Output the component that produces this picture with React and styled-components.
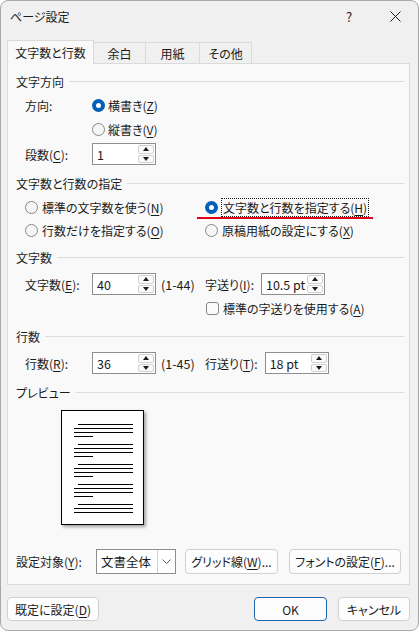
import styled, { createGlobalStyle } from "styled-components";

const GlobalStyle = createGlobalStyle`
  html, body {
    margin: 0;
    padding: 0;
    background: #ffffff;
  }
  body {
    font-family: "Noto Sans CJK JP", "Noto Sans", sans-serif;
    font-size: 12px;
    color: #1b1b1b;
    font-feature-settings: "palt";
  }
  u {
    text-underline-offset: 2px;
  }
`;

const Window = styled.div`
  width: 419px;
  height: 631px;
  box-sizing: border-box;
  border: 1px solid #a9a9a9;
  border-radius: 8px;
  background: #f0f0f0;
  display: flex;
  flex-direction: column;
  overflow: hidden;
`;

const TitleBar = styled.div`
  height: 30px;
  display: flex;
  align-items: center;
  padding-left: 9px;
`;

const Title = styled.span`
  flex: 1;
  font-size: 12px;
`;

const TitleButton = styled.div`
  width: 46px;
  height: 30px;
  display: flex;
  align-items: center;
  justify-content: center;
  font-size: 13px;
`;

const TabStrip = styled.div`
  height: 32px;
  display: flex;
  align-items: flex-end;
  padding-left: 6px;
`;

const Tab = styled.div`
  width: ${(p) => p.$w}px;
  height: ${(p) => (p.$active ? 24 : 21)}px;
  box-sizing: border-box;
  display: flex;
  align-items: center;
  justify-content: center;
  border: 1px solid #dadada;
  border-bottom: none;
  margin-left: ${(p) => (p.$first ? 0 : -1)}px;
  margin-bottom: ${(p) => (p.$active ? -1 : 0)}px;
  background: ${(p) => (p.$active ? "#f9f9f9" : "#f0f0f0")};
  position: relative;
  z-index: ${(p) => (p.$active ? 1 : 0)};
`;

const Panel = styled.div`
  margin: 0 8px 0 6px;
  height: 522px;
  box-sizing: border-box;
  border: 1px solid #dadada;
  background: #f9f9f9;
  padding: 8px 5px 0 8px;
  display: flex;
  flex-direction: column;
`;

const Heading = styled.div`
  height: 18px;
  margin-top: ${(p) => p.$mt || 0}px;
  display: flex;
  align-items: center;
  gap: 5px;
  &::after {
    content: "";
    flex: 1;
    height: 1px;
    background: #dcdcdc;
  }
`;

const Row = styled.div`
  display: flex;
  align-items: center;
  height: ${(p) => p.$h || 24}px;
  margin-top: ${(p) => p.$mt || 0}px;
  padding-left: ${(p) => (p.$indent ?? 9)}px;
  white-space: nowrap;
`;

const Label = styled.span`
  flex-shrink: 0;
  width: ${(p) => (p.$w ? `${p.$w}px` : "auto")};
  margin-right: ${(p) => p.$mr || 0}px;
`;

const Range = styled.span`
  width: 44px;
  padding-left: 5px;
  flex-shrink: 0;
  font-size: 12.5px;
`;

const SpinBox = styled.div`
  width: ${(p) => p.$w || 64}px;
  height: 22px;
  box-sizing: border-box;
  border: 1px solid #8e8e8e;
  background: #ffffff;
  display: flex;
  flex-shrink: 0;
`;

const SpinValue = styled.span`
  flex: 1;
  display: flex;
  align-items: center;
  padding-left: 4px;
  font-size: 12.5px;
`;

const SpinButtons = styled.div`
  width: 16px;
  display: flex;
  flex-direction: column;
  gap: 1px;
  padding: 1px 1px 1px 0;
`;

const SpinArrow = styled.div`
  flex: 1;
  border: 1px solid #d0d0d0;
  border-radius: 2px;
  background: #fbfbfb;
  display: flex;
  align-items: center;
  justify-content: center;
  &::before {
    content: "";
    border-left: 3.5px solid transparent;
    border-right: 3.5px solid transparent;
    ${(p) =>
      p.$down
        ? "border-top: 4px solid #1b1b1b;"
        : "border-bottom: 4px solid #1b1b1b;"}
  }
`;

const Option = styled.label`
  display: flex;
  align-items: center;
  gap: ${(p) => p.$gap ?? 4}px;
  height: 100%;
  position: relative;
`;

const RadioMark = styled.span`
  width: 13px;
  height: 13px;
  box-sizing: border-box;
  border-radius: 50%;
  flex-shrink: 0;
  display: flex;
  align-items: center;
  justify-content: center;
  background: ${(p) => (p.$on ? "#005fb8" : "#f6f6f6")};
  border: ${(p) => (p.$on ? "none" : "1px solid #878787")};
  &::after {
    content: "";
    display: ${(p) => (p.$on ? "block" : "none")};
    width: 5px;
    height: 5px;
    border-radius: 50%;
    background: #ffffff;
  }
`;

const CheckMark = styled.span`
  width: 13px;
  height: 13px;
  box-sizing: border-box;
  border: 1px solid #878787;
  border-radius: 3px;
  background: #fbfbfb;
  flex-shrink: 0;
`;

const Focused = styled.span`
  outline: 1px dotted #1b1b1b;
  outline-offset: 0;
  padding: 0 1px;
  line-height: 16px;
`;

const RedMark = styled.span`
  position: absolute;
  left: -8px;
  width: 176px;
  bottom: 0;
  height: 2px;
  background: #e0001a;
`;

const OptionGrid = styled.div`
  display: grid;
  grid-template-columns: 180px auto;
  grid-auto-rows: 23px;
  margin-top: ${(p) => p.$mt || 0}px;
  padding-left: 9px;
  white-space: nowrap;
`;

const Page = styled.div`
  width: 83px;
  height: 115px;
  box-sizing: border-box;
  margin: 9px 0 0 45px;
  border: 1px solid #000000;
  background: #ffffff;
  box-shadow: 2px 2px 3px rgba(0, 0, 0, 0.35);
`;

const Select = styled.div`
  width: 80px;
  height: 25px;
  box-sizing: border-box;
  border: 1px solid #8e8e8e;
  background: #ffffff;
  display: flex;
  flex-shrink: 0;
  margin-right: 9px;
`;

const SelectText = styled.span`
  flex: 1;
  display: flex;
  align-items: center;
  padding-left: 4px;
  font-size: 12.5px;
`;

const SelectArrow = styled.span`
  width: 17px;
  border-left: 1px solid #d0d0d0;
  display: flex;
  align-items: center;
  justify-content: center;
`;

const Button = styled.div`
  width: ${(p) => p.$w}px;
  height: ${(p) => p.$h || 25}px;
  box-sizing: border-box;
  border: 1px solid ${(p) => (p.$primary ? "#1c64ad" : "#d0d0d0")};
  border-radius: 4px;
  background: #fdfdfd;
  display: flex;
  align-items: center;
  justify-content: center;
  flex-shrink: 0;
  margin-right: ${(p) => p.$mr || 0}px;
  margin-left: ${(p) => (p.$push ? "auto" : "0")};
`;

const Footer = styled.div`
  display: flex;
  margin: 12px 8px 0 6px;
`;

function Spin({ value, width }) {
  return (
    <SpinBox $w={width}>
      <SpinValue>{value}</SpinValue>
      <SpinButtons>
        <SpinArrow />
        <SpinArrow $down />
      </SpinButtons>
    </SpinBox>
  );
}

function Radio({ on, gap, children, extra }) {
  return (
    <Option $gap={gap}>
      <RadioMark $on={on} />
      <span>{children}</span>
      {extra}
    </Option>
  );
}

// text lines on the preview sheet: first line indented, last one short
function PreviewLines() {
  const groups = [14, 34, 54, 74, 94];
  return (
    <svg width="81" height="113" viewBox="0 0 81 113">
      {groups.map((top, g) => (
        <g key={top} fill="#000">
          <rect x="16" y={top - 1} width="55" height="1" />
          <rect x="12" y={top + 3} width="59" height="1" />
          <rect x="12" y={top + 7} width="59" height="1" />
          {g < groups.length - 1 && <rect x="12" y={top + 11} width="19" height="1" />}
        </g>
      ))}
    </svg>
  );
}

export default function App() {
  return (
    <>
      <GlobalStyle />
      <Window>
        <TitleBar>
          <Title>ページ設定</Title>
          <TitleButton>?</TitleButton>
          <TitleButton>
            <svg width="11" height="11" viewBox="0 0 11 11">
              <path d="M0.5 0.5 L10.5 10.5 M10.5 0.5 L0.5 10.5" stroke="#1b1b1b" strokeWidth="1" />
            </svg>
          </TitleButton>
        </TitleBar>

        <TabStrip>
          <Tab $w={87} $active $first>文字数と行数</Tab>
          <Tab $w={53}>余白</Tab>
          <Tab $w={55}>用紙</Tab>
          <Tab $w={53}>その他</Tab>
        </TabStrip>

        <Panel>
          <Heading>文字方向</Heading>
          <Row $mt={3}>
            <Label $w={67}>方向:</Label>
            <Radio on gap={3}>
              横書き(<u>Z</u>)
            </Radio>
          </Row>
          <Row>
            <Label $w={67} />
            <Radio gap={3}>
              縦書き(<u>V</u>)
            </Radio>
          </Row>
          <Row $mt={1}>
            <Label $w={67}>
              段数(<u>C</u>):
            </Label>
            <Spin value="1" />
          </Row>

          <Heading $mt={8}>文字数と行数の指定</Heading>
          <OptionGrid $mt={4}>
            <Radio>
              標準の文字数を使う(<u>N</u>)
            </Radio>
            <Radio on extra={<RedMark />}>
              <Focused>
                文字数と行数を指定する(<u>H</u>)
              </Focused>
            </Radio>
            <Radio>
              行数だけを指定する(<u>O</u>)
            </Radio>
            <Radio>
              原稿用紙の設定にする(<u>X</u>)
            </Radio>
          </OptionGrid>

          <Heading $mt={6}>文字数</Heading>
          <Row $mt={6}>
            <Label $w={67}>
              文字数(<u>E</u>):
            </Label>
            <Spin value="40" />
            <Range>(1-44)</Range>
            <Label $mr={7}>
              字送り(<u>I</u>):
            </Label>
            <Spin value="10.5 pt" />
          </Row>
          <Row $indent={190}>
            <Option $gap={4}>
              <CheckMark />
              <span>
                標準の字送りを使用する(<u>A</u>)
              </span>
            </Option>
          </Row>

          <Heading $mt={7}>行数</Heading>
          <Row $mt={6}>
            <Label $w={67}>
              行数(<u>R</u>):
            </Label>
            <Spin value="36" />
            <Range>(1-45)</Range>
            <Label $mr={7}>
              行送り(<u>T</u>):
            </Label>
            <Spin value="18 pt" />
          </Row>

          <Heading $mt={8}>プレビュー</Heading>
          <Page>
            <PreviewLines />
          </Page>

          <Row $mt={24} $h={25} $indent={0}>
            <Label $w={80}>
              設定対象(<u>Y</u>):
            </Label>
            <Select>
              <SelectText>文書全体</SelectText>
              <SelectArrow>
                <svg width="9" height="5" viewBox="0 0 9 5">
                  <path d="M0.5 0.5 L4.5 4.5 L8.5 0.5" fill="none" stroke="#5c5c5c" strokeWidth="1" />
                </svg>
              </SelectArrow>
            </Select>
            <Button $w={93} $mr={11}>
              <span>
                グリッド線(<u>W</u>)...
              </span>
            </Button>
            <Button $w={112}>
              <span>
                フォントの設定(<u>F</u>)...
              </span>
            </Button>
          </Row>
        </Panel>

        <Footer>
          <Button $w={92} $h={24}>
            <span>
              既定に設定(<u>D</u>)
            </span>
          </Button>
          <Button $w={73} $h={24} $primary $push $mr={11}>
            OK
          </Button>
          <Button $w={72} $h={24}>
            キャンセル
          </Button>
        </Footer>
      </Window>
    </>
  );
}
